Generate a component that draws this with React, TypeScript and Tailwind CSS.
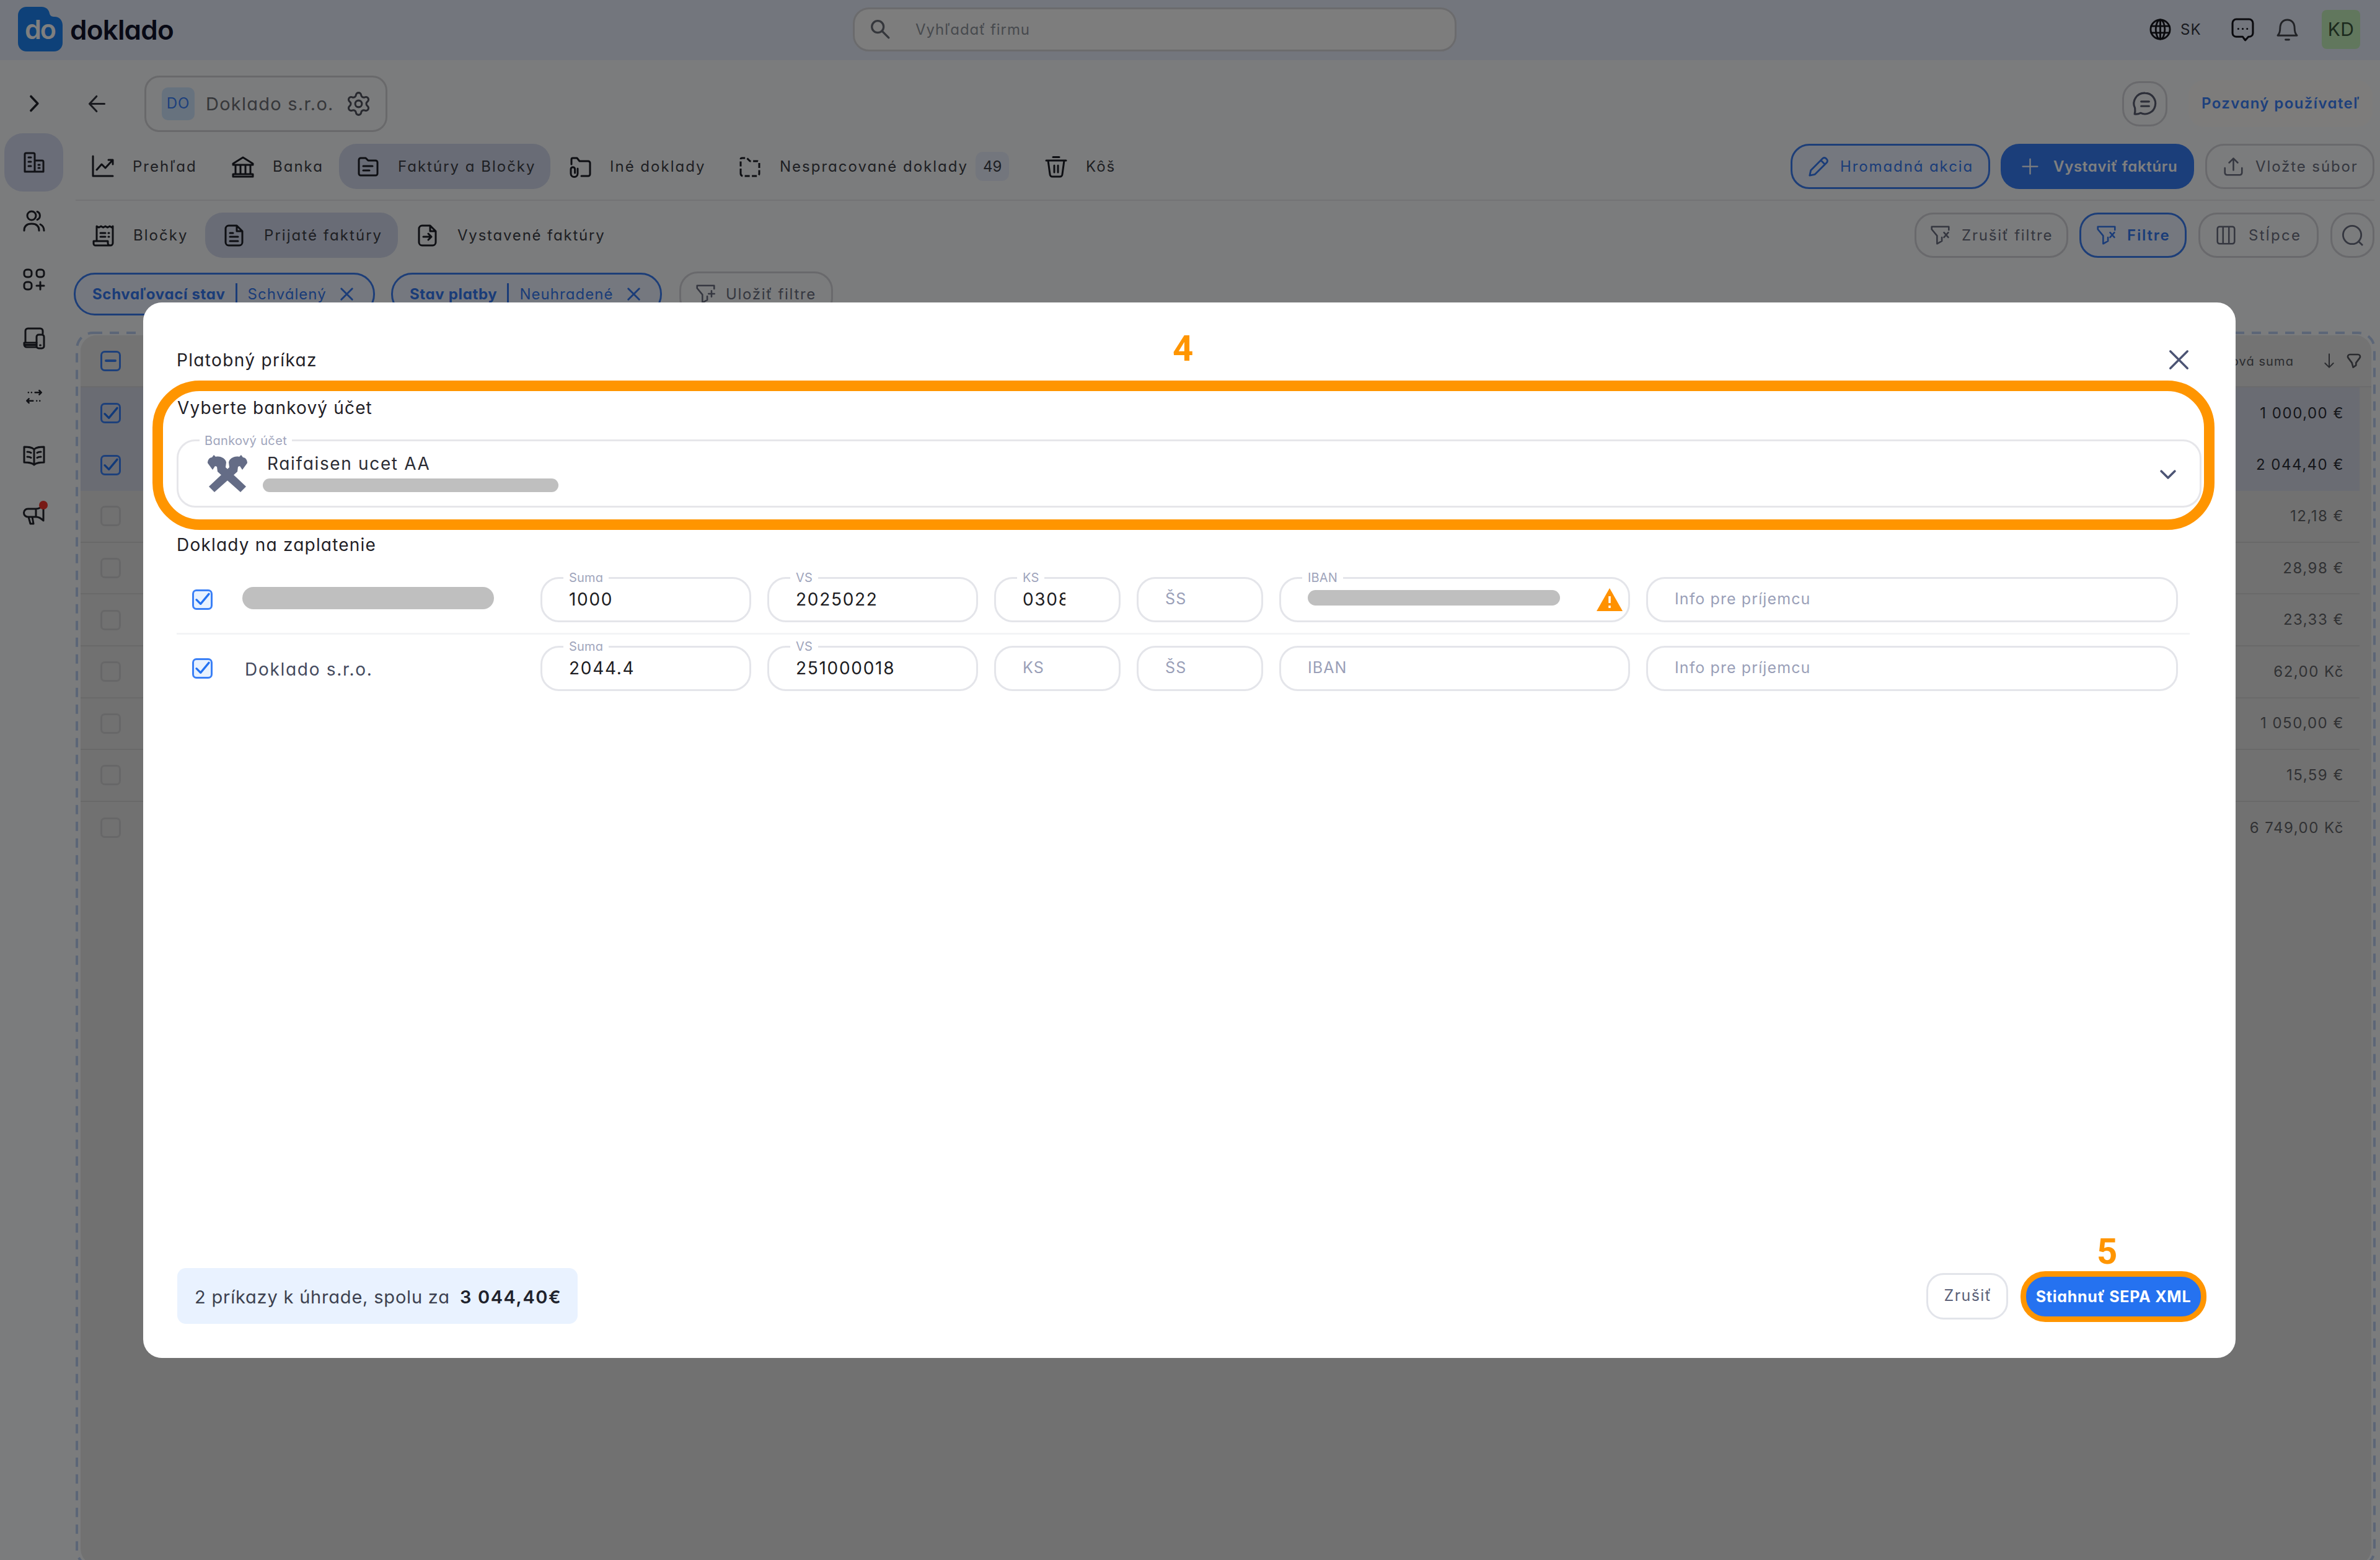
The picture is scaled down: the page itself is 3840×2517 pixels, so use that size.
import React from "react";
import { clsx } from "clsx";
import { Settings } from "lucide-react";

type IconProps = {
  className?: string;
  sw?: number;
  children: React.ReactNode;
};

function Icon({ className = "w-[36px] h-[36px]", sw = 3, children }: IconProps) {
  return (
    <svg
      viewBox="0 0 36 36"
      fill="none"
      stroke="currentColor"
      strokeWidth={sw}
      strokeLinecap="round"
      strokeLinejoin="round"
      className={clsx("shrink-0 overflow-visible", className)}
    >
      {children}
    </svg>
  );
}

const paths = {
  building: <path d="M3 33V5a2 2 0 0 1 2-2h12a2 2 0 0 1 2 2v28M3 33h30V17a2 2 0 0 0-2-2H19M9 10h4M9 17h4M9 24h4M25 22h2M25 27h2" />,
  users: (
    <>
      <circle cx="14" cy="10" r="7" />
      <path d="M2 34c0-8 5-11 12-11s12 3 12 11M23 3.500a7 7 0 0 1 0 13M28 24c4 2 6 5 6 10" />
    </>
  ),
  apps: (
    <>
      <rect x="2" y="2" width="12" height="12" rx="4.500" />
      <rect x="22" y="2" width="12" height="12" rx="4.500" />
      <rect x="2" y="22" width="12" height="12" rx="4.500" />
      <path d="M28 22v12M22 28h12" />
    </>
  ),
  devices: (
    <>
      <path d="M4 25V6a4 4 0 0 1 4-4h20a4 4 0 0 1 4 4v4M22 25H2v3a4 4 0 0 0 4 4h16M2 28.500h20" />
      <rect x="22" y="12" width="12" height="22" rx="3.500" />
      <path d="M27.500 29h1" />
    </>
  ),
  transfer: <path d="M7 10h.1M13 10h.1M20 10h12M28 6l4 4-4 4M29 26h.1M23 26h.1M16 26H4M8 22l-4 4 4 4" />,
  book: <path d="M18 8c-4-4-10-4-16-4v25c6 0 12 0 16 4 4-4 10-4 16-4V4c-6 0-12 0-16 4zM18 8v25M7 12c2 0 4 0 6 1.500M7 20c2 0 4 0 6 1.500M29 12c-2 0-4 0-6 1.500M29 20c-2 0-4 0-6 1.500" />,
  megaphone: <path d="M21 10H8a6 6 0 0 0 0 13h13M21 10c5 0 9-3 12-6v25c-3-3-7-6-12-6M21 10v13M9 23l3 11h5l-2-11" />,
  chart: <path d="M2 1v32h32M8 23l8-9 6 6L33 8M27 7h7v7" />,
  bank: <path d="M2 13 18 3l16 10v2H2zM6 15v15M14 15v15M22 15v15M30 15v15M2 30h32v4H2z" />,
  folder: <path d="M3 29V7a3 3 0 0 1 3-3h8l4 4h12a3 3 0 0 1 3 3v18a3 3 0 0 1-3 3H6a3 3 0 0 1-3-3zM10 17h15M10 24h10" />,
  folderClip: <path d="M4 14V6a2 2 0 0 1 2-2h7l4 5h14a3 3 0 0 1 3 3v18a3 3 0 0 1-3 3H20M14 21v8a5.500 5.500 0 0 1-11 0v-7a3.300 3.300 0 0 1 6.600 0v6" />,
  folderDashed: <path strokeDasharray="8 3.500" strokeLinecap="butt" d="M3 29V6a2 2 0 0 1 2-2h8l5 5h12a3 3 0 0 1 3 3v17a4 4 0 0 1-4 4H7a4 4 0 0 1-4-4z" />,
  trash: <path d="M2 8h32M13 2.500h10M5 8l3 22a4 4 0 0 0 4 4h12a4 4 0 0 0 4-4l3-22M15 16v11M21 16v11" />,
  pencil: <path d="m3 33 2-9L25 4a4 4 0 0 1 6 0l1 1a4 4 0 0 1 0 6L12 31zM22 7l7 7" />,
  plus: <path d="M18 2v32M2 18h32" />,
  upload: <path d="M18 25V3M10 11l8-8 8 8M2 21v9a4 4 0 0 0 4 4h24a4 4 0 0 0 4-4v-9" />,
  receipt: <path d="M7 26V3l3.500 2L14 3l3.500 2L21 3l3.500 2L28 3l3.500 2L33 3v27a4 4 0 0 1-4 4H5a3 3 0 0 1-3-3v-4h23v3a4 4 0 0 0 4 4M13 14h8M26 14h1M13 20h8M26 20h1" />,
  doc: <path d="M9 2h13l9 9v18a5 5 0 0 1-5 5H9a5 5 0 0 1-5-5V7a5 5 0 0 1 5-5zM22 2v9h9M11 14h5M11 20h13M11 27h13" />,
  docArrow: <path d="M9 2h13l9 9v18a5 5 0 0 1-5 5H9a5 5 0 0 1-5-5V7a5 5 0 0 1 5-5zM22 2v9h9M11 20h13M19 15l5 5-5 5" />,
  filterX: <path d="M34 8V2H2v5l10 12v15l9-5v-7M25 13l8 9M33 13l-8 9" />,
  filterPlus: <path d="M34 8V2H2v5l10 12v15l9-5v-7M29 12v11M23.500 17.500h11" />,
  columns: <path d="M6 2h24a4 4 0 0 1 4 4v24a4 4 0 0 1-4 4H6a4 4 0 0 1-4-4V6a4 4 0 0 1 4-4zM12.500 2v32M23.500 2v32" />,
  searchSmall: (
    <>
      <circle cx="13" cy="13" r="11" />
      <path d="m21.500 21.500 12 12" />
    </>
  ),
  search: (
    <>
      <circle cx="17" cy="17" r="15.500" />
      <path d="m28 28 6 6" />
    </>
  ),
  globe: (
    <>
      <circle cx="18" cy="18" r="16" />
      <ellipse cx="18" cy="18" rx="7.500" ry="16" />
      <path d="M3 12.500h30M3 23.500h30M18 2v32" />
    </>
  ),
  chat: <path d="M8 2h20a6 6 0 0 1 6 6v16a6 6 0 0 1-6 5.500h-1L22 35l-4-5.500H8A6 6 0 0 1 2 24V8a6 6 0 0 1 6-6zM11 17h.1M18 17h.1M25 17h.1" />,
  bell: <path d="M2 28h32c-3-3-4-6-4-12 0-9-5-14-12-14S6 7 6 16c0 6-1 9-4 12zM15 35h6" />,
  bubble: <path d="M18 2a16 16 0 1 1-7 30.500C8 34 5 34.500 2 34c1-3 1-5 .500-9A16 16 0 0 1 18 2zM12 15h12M12 22h12" />,
  close: <path d="m3 3 30 30M33 3 3 33" />,
  arrowDown: <path d="M18 2v32M8 24l10 10 10-10" />,
  funnel: <path d="M8 3h20a5 5 0 0 1 4 8l-9 12v6l-7 5-3-11-9-12a5 5 0 0 1 4-8z" />,
};

type IconName = keyof typeof paths;

type TabProps = {
  icon: IconName;
  label: string;
  className: string;
  badge?: string;
};

function Tab({ icon, label, className, badge }: TabProps) {
  return (
    <div className={clsx("flex h-[73px] shrink-0 items-center rounded-[28px]", className)}>
      <Icon className="mr-[30px] h-[36px] w-[36px] text-[#1c1e26]">{paths[icon]}</Icon>
      <span>{label}</span>
      {badge && (
        <span className="ml-[12px] flex h-[47px] w-[54px] items-center justify-center rounded-[12px] bg-[#e7edfb] tracking-normal">
          {badge}
        </span>
      )}
    </div>
  );
}

type ButtonProps = {
  icon: IconName;
  label: string;
  className: string;
  iconClass: string;
};

function ToolButton({ icon, label, className, iconClass }: ButtonProps) {
  return (
    <button className={clsx("flex h-[73px] shrink-0 items-center rounded-[30px]", className)}>
      <Icon className={iconClass}>{paths[icon]}</Icon>
      {label}
    </button>
  );
}

function Chip({ name, value, className }: { name: string; value: string; className: string }) {
  return (
    <div className={clsx("flex h-[69px] items-center rounded-[34px] border-[3px] border-[#3a7cf0] bg-[#eaf1ff] pl-[27px] text-[#3578f0]", className)}>
      <span className="font-bold tracking-[0.65px]">{name}</span>
      <span className="ml-[16px] h-[36px] w-[3px] bg-[#3578f0]" />
      <span className="ml-[17px] tracking-[1.05px]">{value}</span>
      <Icon className="ml-[22px] h-[21px] w-[21px]" sw={5}>
        {paths.close}
      </Icon>
    </div>
  );
}

function Checkbox({ state, className }: { state: "on" | "off" | "mixed"; className?: string }) {
  return (
    <span
      className={clsx(
        "flex h-[33px] w-[33px] shrink-0 items-center justify-center rounded-[7px] border-[3px]",
        state === "off" ? "border-[#cfcfd0]" : "border-[#3b80f6]",
        className
      )}
    >
      {state === "on" && (
        <Icon className="h-[24px] w-[24px] text-[#2372f2]" sw={5}>
          <path d="m3 19 10 10L33 5" />
        </Icon>
      )}
      {state === "mixed" && <span className="h-[4px] w-[19px] rounded-full bg-[#3b80f6]" />}
    </span>
  );
}

type FieldProps = {
  label: string;
  className: string;
  value?: string;
  filled?: boolean;
  children?: React.ReactNode;
};

function Field({ label, className, value, filled, children }: FieldProps) {
  const floating = filled || value !== undefined;
  return (
    <div className={clsx("relative flex h-[73px] shrink-0 items-center rounded-[30px] border-[3px] border-[#e4e5ea] pl-[43px]", className)}>
      {floating && (
        <span className="absolute left-[34px] top-[-12px] bg-white px-[9px] text-[20px] leading-none tracking-[0.2px] text-[#a0a5bc]">
          {label}
        </span>
      )}
      {value !== undefined && (
        <span className="text-[28px] tracking-[1.7px] text-[#1c1c22]">{value}</span>
      )}
      {!floating && <span className="text-[25px] tracking-[1.1px] text-[#9a9fb8]">{label}</span>}
      {children}
    </div>
  );
}

const sidebar: IconName[] = ["building", "users", "apps", "devices", "transfer", "book", "megaphone"];

const amounts = [
  { amount: "1 000,00 €", selected: true },
  { amount: "2 044,40 €", selected: true },
  { amount: "12,18 €", selected: false },
  { amount: "28,98 €", selected: false },
  { amount: "23,33 €", selected: false },
  { amount: "62,00 Kč", selected: false },
  { amount: "1 050,00 €", selected: false },
  { amount: "15,59 €", selected: false },
  { amount: "6 749,00 Kč", selected: false },
];

function Header() {
  return (
    <header className="flex h-[97px] items-center bg-[#e7edfa] pb-[3px]">
      <div className="ml-[29px] flex w-[260px] items-center">
        <div className="relative h-[72px] w-[72px]">
          <svg viewBox="0 0 72 72" className="h-[72px] w-[72px]">
            <path
              d="M14 0h24c8 0 12 5 13 11 1 4 4 5 8 5 8 0 13 6 13 14v28c0 8-6 14-14 14H14C6 72 0 66 0 58V14C0 6 6 0 14 0z"
              fill="#1c82f2"
            />
          </svg>
          <span className="absolute left-[11px] top-[15px] text-[43px] font-semibold leading-none tracking-[-2px] text-white">do</span>
        </div>
        <span className="ml-[12px] pt-[2px] text-[44px] font-semibold leading-none tracking-[-0.8px] text-[#10122a]">doklado</span>
      </div>
      <div className="ml-[1087px] flex h-[71px] w-[974px] items-center rounded-[26px] border-[3px] border-[#d6d7da] bg-[#fbfbfb] pl-[26px]">
        <Icon className="mr-[41px] h-[31px] w-[31px] text-[#6b6e78]" sw={3.8}>
          {paths.searchSmall}
        </Icon>
        <span className="pt-[1px] text-[24px] tracking-[0.95px] text-[#8f949c]">Vyhľadať firmu</span>
      </div>
      <div className="ml-auto mr-[32px] flex items-center pt-[1px]">
        <Icon className="mr-[15px] h-[35px] w-[35px] text-[#14151c]">{paths.globe}</Icon>
        <span className="w-[82px] text-[24px] tracking-[1.2px] text-[#33353e]">SK</span>
        <Icon className="mr-[36px] h-[37px] w-[37px] text-[#14151c]">{paths.chat}</Icon>
        <Icon className="mr-[38px] h-[35px] w-[35px] text-[#44464f]">{paths.bell}</Icon>
        <div className="flex h-[63px] w-[62px] items-center justify-center rounded-[8px] bg-[#c2eebb] text-[30px] tracking-[0.3px] text-[#39543a]">
          KD
        </div>
      </div>
    </header>
  );
}

function Sidebar() {
  return (
    <nav className="flex w-[119px] shrink-0 flex-col pl-[7px] pt-[23px] text-[#22242c]">
      <div className="flex h-[94.600px] w-[95px] items-center justify-center">
        <Icon className="h-[26px] w-[26px]" sw={5}>
          <path d="M11 2l15 16-15 16" />
        </Icon>
      </div>
      {sidebar.map((name) => (
        <div
          key={name}
          className={clsx(
            "relative flex h-[94.600px] w-[95px] items-center justify-center rounded-[30px]",
            name === "building" && "bg-[#d5dbf0]"
          )}
        >
          <Icon className={name === "transfer" ? "h-[30px] w-[30px]" : "h-[36px] w-[36px]"}>{paths[name]}</Icon>
          {name === "megaphone" && (
            <span className="absolute left-[56px] top-[26px] h-[14px] w-[14px] rounded-full bg-[#f0352d]" />
          )}
        </div>
      ))}
    </nav>
  );
}

function CompanyBar() {
  return (
    <div className="flex h-[135px] items-center pt-[5px]">
      <Icon className="ml-[24px] h-[27px] w-[27px] text-[#33353e]" sw={4.2}>
        <path d="M34 18H2M17 2 2 18l15 16" />
      </Icon>
      <div className="ml-[63px] flex h-[91px] w-[392px] items-center rounded-[24px] border-[3px] border-[#d2d3d6] pl-[25px]">
        <span className="flex h-[53px] w-[53px] items-center justify-center rounded-[10px] bg-[#cfe4fc] text-[24px] tracking-[0.8px] text-[#3a80f8]">
          DO
        </span>
        <span className="ml-[18px] w-[225px] pt-[1px] text-[29px] tracking-[1.25px] text-[#6c6e74]">Doklado s.r.o.</span>
        <Settings className="h-[43px] w-[43px] text-[#50535e]" strokeWidth={1.7} />
      </div>
      <div className="ml-auto flex h-[73px] w-[73px] items-center justify-center rounded-[28px] border-[3px] border-[#d2d3d8]">
        <Icon className="h-[38px] w-[38px] text-[#5a5e72]">{paths.bubble}</Icon>
      </div>
      <div className="ml-[34px] mr-[5px] flex h-[76px] w-[297px] items-center rounded-[26px] bg-[#fbf9f7] pl-[21px] text-[24px] font-semibold tracking-[1.4px] text-[#3a80f8]">
        Pozvaný používateľ
      </div>
    </div>
  );
}

function InvoiceTable() {
  return (
    <div className="relative ml-[3px] mt-[26px] h-[1996px] w-[3711px] pl-[8px] pr-[7px] pt-[6px]">
      {/* dashed drop zone around the table */}
      <svg className="absolute inset-0 h-full w-full" fill="none">
        <rect x="2" y="2" width="3707" height="1990" rx="26" stroke="#b9ccee" strokeWidth="4" strokeDasharray="15 12" />
      </svg>
      <div className="relative h-[1984px] rounded-[26px] bg-[#e2e2e2]">
        <div className="flex h-[84px] items-center rounded-t-[26px] border-b-2 border-[#d6d6d8] bg-[#e7e7e6] pl-[32px] pr-[16px] text-[20px] text-[#55575f]">
          <Checkbox state="mixed" />
          <span className="ml-auto mr-[45px] pt-[2px] tracking-[1.1px]">Celková suma</span>
          <Icon className="mr-[16px] h-[24px] w-[24px]">{paths.arrowDown}</Icon>
          <Icon className="h-[24px] w-[24px]" sw={4}>
            {paths.funnel}
          </Icon>
        </div>
        {amounts.map((row, i) => (
          <div
            key={i}
            className={clsx(
              "mr-[19px] flex h-[83.600px] items-center pl-[32px] pr-[25px] text-[24px] tracking-[1.5px]",
              row.selected ? "bg-[#d4d9e6] text-[#2c2e36]" : "text-[#626469]",
              !row.selected && i < amounts.length - 1 && "border-b-2 border-[#d2d2d3]"
            )}
          >
            <Checkbox state={row.selected ? "on" : "off"} />
            <span className="ml-auto">{row.amount}</span>
          </div>
        ))}
      </div>
    </div>
  );
}

function PaymentModal() {
  return (
    <div className="relative flex h-[1703px] w-[3376px] flex-col rounded-[30px] bg-white pt-[57px]">
      <div className="flex h-[72px] items-center justify-between pl-[54px] pr-[75px]">
        <h2 className="text-[28px] tracking-[1.35px] text-[#1f2026]">Platobný príkaz</h2>
        <Icon className="mb-[2px] h-[33px] w-[33px] text-[#4c5474]" sw={3.8}>
          {paths.close}
        </Icon>
      </div>
      <h3 className="flex h-[82px] items-center pl-[55px] text-[28px] tracking-[1.15px] text-[#1f2026]">Vyberte bankový účet</h3>

      <div className="relative mx-[54px] mt-[10px] flex h-[110px] w-[3267px] items-center rounded-[30px] border-[3px] border-[#e6e6ea] pl-[47px] pr-[38px]">
        <span className="absolute left-[34px] top-[-11px] bg-white px-[8px] text-[20px] leading-none tracking-[0.35px] text-[#a0a5bc]">
          Bankový účet
        </span>
        <svg viewBox="0 0 64 60" className="h-[60px] w-[64px]" fill="#646c86">
          <path d="M10 0l3 3c8-2 16 3 17 9l-1 8 33 31-9 9L16 27l-1-8-3-1-4 6L0 13c0-5 3-9 7-9z" />
          <path transform="translate(64) scale(-1 1)" d="M10 0l3 3c8-2 16 3 17 9l-1 8 33 31-9 9L16 27l-1-8-3-1-4 6L0 13c0-5 3-9 7-9z" />
        </svg>
        <div className="ml-[25px] flex flex-col gap-[10px]">
          <span className="ml-[7px] text-[28px] leading-none tracking-[1.65px] text-[#2b2c34]">Raifaisen ucet AA</span>
          <span className="h-[22px] w-[477px] rounded-full bg-[#bfbfbf]" />
        </div>
        <Icon className="ml-auto mt-[3px] h-[26px] w-[26px] text-[#4c5474]" sw={5}>
          <path d="m3 10 15 15 15-15" />
        </Icon>
      </div>

      <h3 className="flex h-[94px] items-center pl-[54px] pt-[25px] text-[28px] tracking-[1.2px] text-[#1f2026]">
        Doklady na zaplatenie
      </h3>

      <div className="ml-[54px] flex h-[111px] w-[3248px] items-center gap-[26px] border-b-[3px] border-[#f3f4f6]">
        <div className="flex w-[561px] items-center pl-[25px]">
          <Checkbox state="on" className="bg-[#e8f2ff]" />
          <span className="mb-[4px] ml-[48px] h-[36px] w-[406px] rounded-full bg-[#bfbfbf]" />
        </div>
        <Field label="Suma" value="1000" className="w-[340px]" />
        <Field label="VS" value="2025022" className="w-[340px]" />
        <Field label="KS" filled className="w-[204px]">
          <span className="w-[69px] overflow-hidden text-[28px] tracking-[1.7px] text-[#1c1c22]">0308</span>
        </Field>
        <Field label="ŠS" className="w-[204px]" />
        <Field label="IBAN" filled className="w-[566px]">
          <span className="mb-[5px] h-[25px] w-[407px] rounded-full bg-[#bfbfbf]" />
          <svg viewBox="0 0 42 37" className="ml-[59px] h-[37px] w-[42px]">
            <path d="M21 0l21 37H0z" fill="#ff9100" />
            <path d="M21 13v11M21 28v4" stroke="#fff" strokeWidth="3.500" />
          </svg>
        </Field>
        <Field label="Info pre príjemcu" className="w-[858px]" />
      </div>

      <div className="ml-[54px] flex h-[111px] w-[3248px] items-center gap-[26px] pb-[3px]">
        <div className="flex w-[561px] items-center pl-[25px]">
          <Checkbox state="on" className="bg-[#e8f2ff]" />
          <span className="ml-[52px] pt-[3px] text-[28px] tracking-[1.7px] text-[#444a5e]">Doklado s.r.o.</span>
        </div>
        <Field label="Suma" value="2044.4" className="w-[340px]" />
        <Field label="VS" value="251000018" className="w-[340px]" />
        <Field label="KS" className="w-[204px]" />
        <Field label="ŠS" className="w-[204px]" />
        <Field label="IBAN" className="w-[566px]" />
        <Field label="Info pre príjemcu" className="w-[858px]" />
      </div>

      <div className="mb-[55px] ml-[55px] mr-[47px] mt-auto flex items-center">
        <div className="flex h-[90px] w-[646px] items-center rounded-[14px] bg-[#e9f2ff] pl-[28px] pt-[4px] text-[29px] text-[#3c4150]">
          <span className="w-[428px] tracking-[0.8px]">2 príkazy k úhrade, spolu za</span>
          <span className="font-semibold tracking-[1.6px] text-[#20222c]">3 044,40€</span>
        </div>
        <button className="ml-auto h-[75px] w-[132px] rounded-[28px] border-[3px] border-[#e2e4ea] pl-[2px] text-[25px] tracking-[1.4px] text-[#5c6178]">
          Zrušiť
        </button>
        <button className="ml-[20px] mt-[2px] h-[82px] w-[300px] rounded-[40px] border-[9px] border-[#ff9500] bg-[#2572f0] pt-[1px] text-[25px] font-bold tracking-[0.75px] text-white">
          Stiahnuť SEPA XML
        </button>
      </div>

      {/* step highlights */}
      <div className="absolute left-[15px] top-[126px] h-[241px] w-[3327px] rounded-[76px] border-[17px] border-[#ff9500]" />
      <span className="absolute left-[1661px] top-[45px] font-['Roboto'] text-[58px] font-bold leading-none text-[#ff9500]">4</span>
      <span className="absolute left-[3152px] top-[1502px] font-['Roboto'] text-[58px] font-bold leading-none text-[#ff9500]">5</span>
    </div>
  );
}

export default function App() {
  return (
    <div className="relative h-[2517px] w-[3840px] overflow-hidden whitespace-nowrap bg-[#f6f8fa] font-['Inter',sans-serif] [font-feature-settings:'cv11']">
      <Header />
      <div className="flex">
        <Sidebar />
        <main className="w-[3714px] shrink-0 text-[24px]">
          <CompanyBar />
          <div className="mr-[2px] flex tracking-[2px] text-[#3c3e46]">
            <Tab icon="chart" label="Prehľad" className="w-[227px] pl-[29px]" />
            <Tab icon="bank" label="Banka" className="w-[201px] pl-[28px]" />
            <Tab icon="folder" label="Faktúry a Bločky" className="w-[341px] bg-[#d3d9ec] pl-[29px]" />
            <Tab icon="folderClip" label="Iné doklady" className="w-[276px] pl-[30px]" />
            <Tab icon="folderDashed" label="Nespracované doklady" badge="49" className="w-[493px] pl-[28px]" />
            <Tab icon="trash" label="Kôš" className="pl-[29px]" />
            <div className="ml-auto flex tracking-[1.9px]">
              <ToolButton
                icon="pencil"
                label="Hromadná akcia"
                className="w-[322px] border-[3px] border-[#3a7cf0] bg-[#eaf1ff] pl-[25px] text-[#3578f0]"
                iconClass="mr-[18px] h-[34px] w-[34px]"
              />
              <ToolButton
                icon="plus"
                label="Vystaviť faktúru"
                className="ml-[17px] w-[312px] bg-[#367cf4] pl-[34px] font-semibold tracking-[0.7px] text-white"
                iconClass="mr-[24px] h-[27px] w-[27px]"
              />
              <ToolButton
                icon="upload"
                label="Vložte súbor"
                className="ml-[18px] w-[273px] border-[3px] border-[#d2d3d8] pl-[27px] text-[#6b6f80]"
                iconClass="mr-[20px] h-[31px] w-[31px]"
              />
            </div>
          </div>
          <div className="ml-[3px] mr-[2px] mt-[17px] h-[2px] bg-[#e6e7ea]" />
          <div className="mr-[2px] mt-[19px] flex tracking-[2.05px] text-[#3c3e46]">
            <Tab icon="receipt" label="Bločky" className="w-[212px] pl-[30px]" />
            <Tab icon="doc" label="Prijaté faktúry" className="w-[311px] bg-[#d3d9ec] pl-[29px]" />
            <Tab icon="docArrow" label="Vystavené faktúry" className="pl-[30px] tracking-[1.8px]" />
            <div className="ml-auto flex tracking-[1.8px] text-[#6b6f80]">
              <ToolButton
                icon="filterX"
                label="Zrušiť filtre"
                className="w-[248px] border-[3px] border-[#d2d3d8] pl-[23px]"
                iconClass="mr-[19px] h-[31px] w-[31px]"
              />
              <ToolButton
                icon="filterX"
                label="Filtre"
                className="ml-[18px] w-[173px] border-[3px] border-[#3a7cf0] bg-[#eaf1ff] pl-[25px] font-semibold text-[#3578f0]"
                iconClass="mr-[18px] h-[31px] w-[31px]"
              />
              <ToolButton
                icon="columns"
                label="Stĺpce"
                className="ml-[19px] w-[194px] border-[3px] border-[#d2d3d8] pl-[26px] tracking-[2.3px]"
                iconClass="mr-[21px] h-[31px] w-[31px]"
              />
              <ToolButton
                icon="search"
                label=""
                className="ml-[19px] w-[71px] justify-center border-[3px] border-[#d2d3d8]"
                iconClass="h-[34px] w-[34px]"
              />
            </div>
          </div>
          <div className="mt-[24px] flex h-[69px]">
            <Chip name="Schvaľovací stav" value="Schválený" className="w-[486px]" />
            <Chip name="Stav platby" value="Neuhradené" className="ml-[26px] w-[437px]" />
            <ToolButton
              icon="filterPlus"
              label="Uložiť filtre"
              className="-mt-[2px] ml-[28px] w-[248px] border-[3px] border-[#d2d3d8] pl-[24px] tracking-[1.7px] text-[#6b6f80]"
              iconClass="mr-[17px] h-[31px] w-[31px]"
            />
          </div>
          <InvoiceTable />
        </main>
      </div>

      <div className="absolute inset-0 bg-black/50 pl-[231px] pt-[488px]">
        <PaymentModal />
      </div>
    </div>
  );
}
